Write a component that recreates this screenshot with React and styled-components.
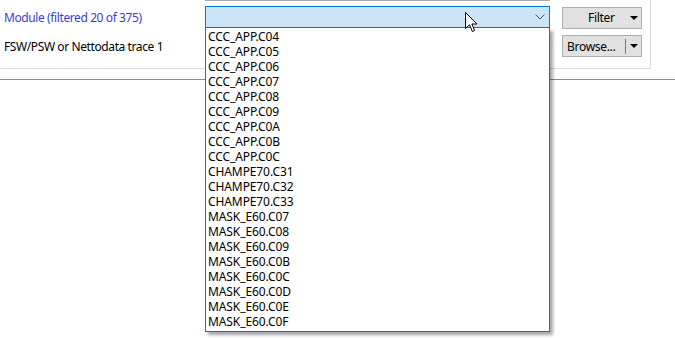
import React from "react";
import styled, { createGlobalStyle } from "styled-components";

const Global = createGlobalStyle`
  html, body { margin: 0; padding: 0; background: #ffffff; }
  body { font-family: "Noto Sans", "Open Sans", sans-serif; font-size: 12px; color: #000; }
`;

const Page = styled.div`
  position: relative;
  width: 675px;
  height: 338px;
  overflow: hidden;
  background: #fff;
`;

const Panel = styled.div`
  box-sizing: border-box;
  width: 651px;
  height: 69px;
  border-right: 1px solid #dcdcdc;
  border-bottom: 1px solid #dcdcdc;
  display: grid;
  grid-template-columns: 189px 345px 80px;
  column-gap: 12px;
  grid-template-rows: 23px 22px;
  row-gap: 6px;
  padding: 6px 0 0 4px;
  align-items: center;
`;

const Divider = styled.div`
  margin-top: 10px;
  height: 1px;
  background: #8c8c8c;
`;

const Label = styled.div`
  color: ${(p) => (p.$accent ? "#3b3bdc" : "#000")};
  white-space: nowrap;
  line-height: 15px;
  letter-spacing: -0.4px;
`;

const ComboCell = styled.div`
  position: relative;
  height: 23px;
  &::before {
    content: "";
    position: absolute;
    left: 0;
    right: 0;
    top: -6px;
    height: 1px;
    background: #a8a8a8;
  }
`;

const Combo = styled.div`
  box-sizing: border-box;
  height: 23px;
  border: 1px solid #0078d7;
  border-bottom-width: 2px;
  background: #cce4f7;
  display: flex;
  align-items: center;
  justify-content: flex-end;
  padding-right: 4px;
`;

const List = styled.ul`
  position: absolute;
  left: 0;
  top: 22px;
  box-sizing: border-box;
  width: 345px;
  height: 304px;
  margin: 0;
  padding: 1px 0 0 0;
  list-style: none;
  background: #fff;
  border: 1px solid #0078d7;
  border-top: none;
  box-shadow: 3px 3px 3px rgba(0, 0, 0, 0.35);
  z-index: 2;
`;

const Item = styled.li`
  height: 15px;
  line-height: 15px;
  padding-left: 2px;
  white-space: nowrap;
  color: #000;
  letter-spacing: -0.1px;
`;

const Button = styled.div`
  box-sizing: border-box;
  height: 22px;
  border: 1px solid #adadad;
  background: #e1e1e1;
  display: flex;
  align-items: center;
  padding: 0 2px 0 ${(p) => (p.$split ? "4px" : "25px")};
  color: #000;
`;

const ButtonText = styled.span`
  flex: 1;
  line-height: 15px;
  letter-spacing: -0.3px;
`;

const Sep = styled.span`
  width: 1px;
  height: 15px;
  background: #7a7a7a;
  margin-right: 4px;
`;

const Caret = styled.span`
  width: 0;
  height: 0;
  margin-right: 1px;
  border-left: 4px solid transparent;
  border-right: 4px solid transparent;
  border-top: 4px solid #000;
`;

const Cursor = styled.svg`
  position: absolute;
  left: 465px;
  top: 12px;
  z-index: 3;
`;

const items = [
  "CCC_APP.C04", "CCC_APP.C05", "CCC_APP.C06", "CCC_APP.C07", "CCC_APP.C08",
  "CCC_APP.C09", "CCC_APP.C0A", "CCC_APP.C0B", "CCC_APP.C0C", "CHAMPE70.C31",
  "CHAMPE70.C32", "CHAMPE70.C33", "MASK_E60.C07", "MASK_E60.C08", "MASK_E60.C09",
  "MASK_E60.C0B", "MASK_E60.C0C", "MASK_E60.C0D", "MASK_E60.C0E", "MASK_E60.C0F",
];

export default function App() {
  return (
    <Page>
      <Global />
      <Panel>
        <Label $accent>Module (filtered 20 of 375)</Label>
        <ComboCell>
          <Combo>
            <svg width="10" height="6" viewBox="0 0 10 6">
              <path d="M0.5 0.5 L5 5 L9.5 0.5" fill="none" stroke="#555" strokeWidth="1" />
            </svg>
          </Combo>
          <List>
            {items.map((t) => (
              <Item key={t}>{t}</Item>
            ))}
          </List>
        </ComboCell>
        <Button>
          <ButtonText>Filter</ButtonText>
          <Caret />
        </Button>
        <Label>FSW/PSW or Nettodata trace 1</Label>
        <div />
        <Button $split>
          <ButtonText>Browse...</ButtonText>
          <Sep />
          <Caret />
        </Button>
      </Panel>
      <Divider />
      <Cursor width="14" height="22" viewBox="0 0 14 22">
        <path d="M0.5 0.5 L0.5 16.5 L4.5 12.8 L7.3 19.5 L9.6 18.5 L6.9 12 L12 12 Z" fill="#fff" stroke="#000" strokeWidth="1" strokeLinejoin="miter" />
      </Cursor>
    </Page>
  );
}
